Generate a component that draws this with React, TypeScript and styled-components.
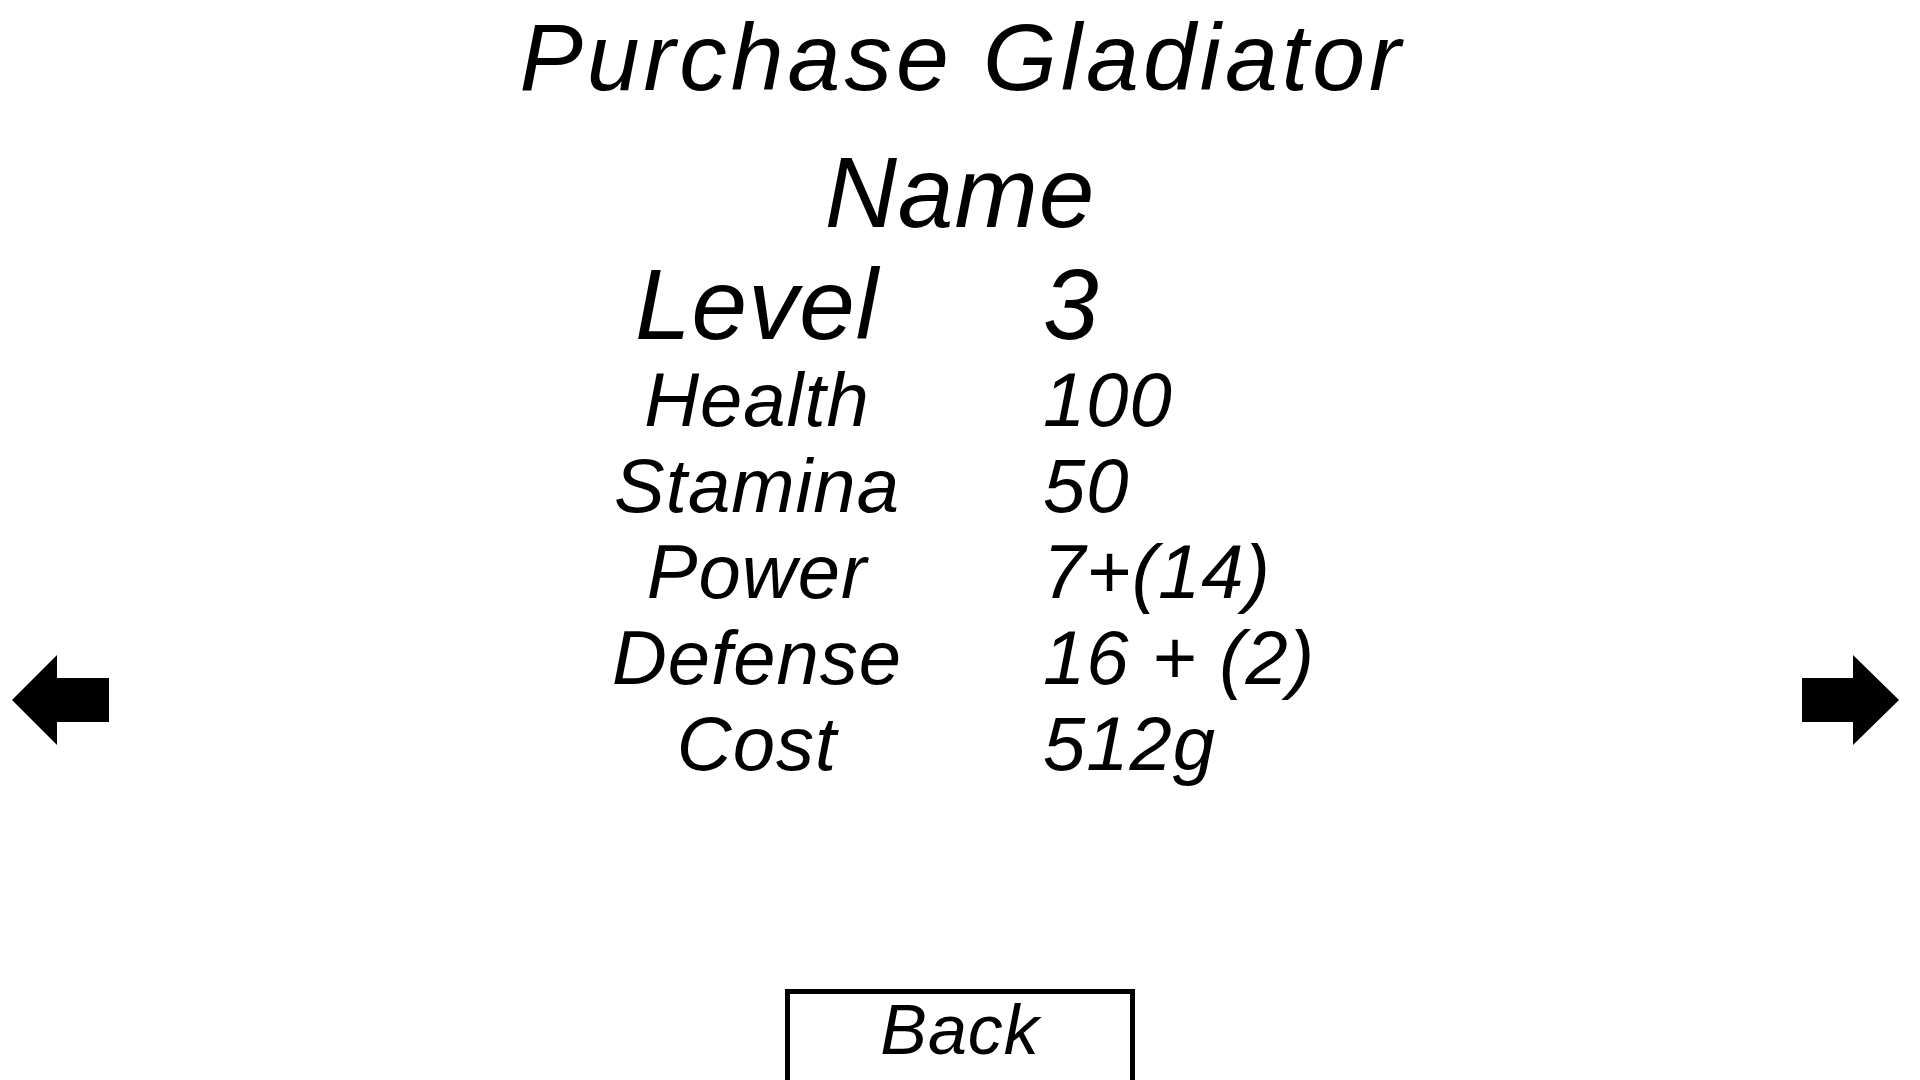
import React from 'react'
import styled, { createGlobalStyle } from 'styled-components'

const GlobalStyle = createGlobalStyle`
  html, body {
    margin: 0;
    padding: 0;
    background: #ffffff;
    overflow: hidden;
  }
  body {
    font-family: 'Liberation Sans', Arial, sans-serif;
    color: #000000;
  }
`

type Stat = { label: string; value: string }

const stats: Stat[] = [
  { label: 'Health', value: '100' },
  { label: 'Stamina', value: '50' },
  { label: 'Power', value: '7+(14)' },
  { label: 'Defense', value: '16 + (2)' },
  { label: 'Cost', value: '512g' },
]

const LeftArrow = () => (
  <svg width="98" height="92" viewBox="0 0 98 92">
    <polygon points="1,45 46,0 46,23 98,23 98,67 46,67 46,90" fill="#000" />
  </svg>
)

const RightArrow = () => (
  <svg width="98" height="92" viewBox="0 0 98 92">
    <polygon points="0,23 51,23 51,0 97,45 51,90 51,67 0,67" fill="#000" />
  </svg>
)

const App = () => {
  const handlePrev = () => {}
  const handleNext = () => {}
  const handleBack = () => {}

  return (
    <>
      <GlobalStyle />
      <Screen>
        <NavColumn side="left">
          <ArrowButton onClick={handlePrev} aria-label="previous">
            <LeftArrow />
          </ArrowButton>
        </NavColumn>
        <Center>
          <Title>Purchase Gladiator</Title>
          <GladiatorName>Name</GladiatorName>
          <StatGrid big>
            <StatLabel>Level</StatLabel>
            <StatValue>3</StatValue>
          </StatGrid>
          <StatGrid>
            {stats.map((s) => (
              <React.Fragment key={s.label}>
                <StatLabel>{s.label}</StatLabel>
                <StatValue>{s.value}</StatValue>
              </React.Fragment>
            ))}
          </StatGrid>
          <BackButton onClick={handleBack}>Back</BackButton>
        </Center>
        <NavColumn side="right">
          <ArrowButton onClick={handleNext} aria-label="next">
            <RightArrow />
          </ArrowButton>
        </NavColumn>
      </Screen>
    </>
  )
}
export default App

const Screen = styled.div`
  width: 1920px;
  height: 1080px;
  display: flex;
  overflow: hidden;
  font-style: italic;
`
const NavColumn = styled.div<{ side: 'left' | 'right' }>`
  width: 240px;
  display: flex;
  justify-content: ${(p) => (p.side === 'left' ? 'flex-start' : 'flex-end')};
  padding-top: 655px;
  padding-left: ${(p) => (p.side === 'left' ? '11px' : '0')};
  padding-right: ${(p) => (p.side === 'right' ? '20px' : '0')};
  box-sizing: border-box;
`
const ArrowButton = styled.button`
  border: none;
  background: none;
  padding: 0;
  width: 98px;
  height: 92px;
  cursor: pointer;
  display: block;
  svg {
    display: block;
  }
`
const Center = styled.div`
  flex: 1;
  display: flex;
  flex-direction: column;
  align-items: center;
  padding-top: 7px;
`
const Title = styled.div`
  font-size: 95px;
  line-height: 100px;
  height: 100px;
  letter-spacing: 4px;
  padding-left: 4px;
  white-space: nowrap;
`
const GladiatorName = styled.div`
  font-size: 100px;
  line-height: 100px;
  height: 100px;
  letter-spacing: 1px;
  margin-top: 35px;
`
const StatGrid = styled.div<{ big?: boolean }>`
  display: grid;
  grid-template-columns: 320px 280px;
  column-gap: 126px;
  font-size: ${(p) => (p.big ? '100px' : '76px')};
  line-height: ${(p) => (p.big ? '100px' : '86px')};
  grid-auto-rows: ${(p) => (p.big ? '100px' : '86px')};
  letter-spacing: 1px;
  margin-top: ${(p) => (p.big ? '12px' : '3px')};
`
const StatLabel = styled.div`
  text-align: center;
  white-space: nowrap;
`
const StatValue = styled.div`
  text-align: left;
  white-space: nowrap;
`
const BackButton = styled.button`
  margin-top: 202px;
  width: 350px;
  height: 120px;
  flex-shrink: 0;
  box-sizing: border-box;
  border: 5px solid #000;
  background: #fff;
  font-family: 'Liberation Sans', Arial, sans-serif;
  font-style: italic;
  font-size: 70px;
  line-height: 70px;
  letter-spacing: 1px;
  color: #000;
  padding: 1px 0 0;
  display: flex;
  justify-content: center;
  align-items: flex-start;
  cursor: pointer;
`
